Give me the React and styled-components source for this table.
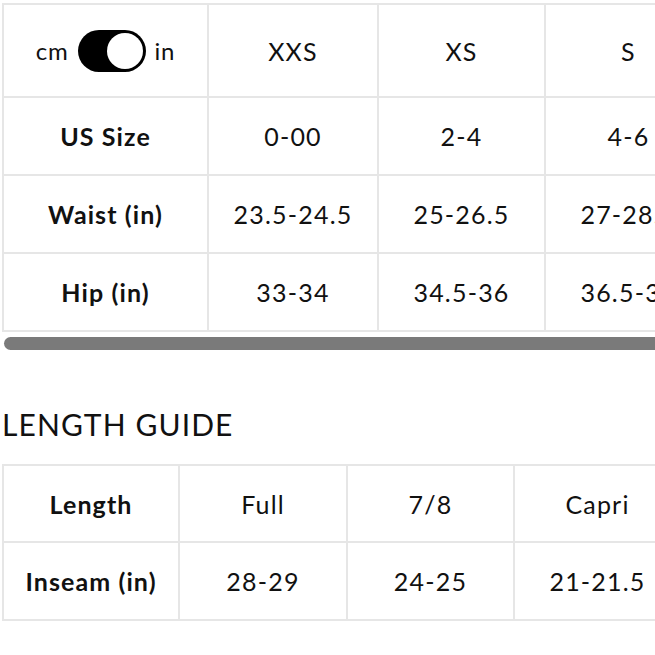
import React from "react";
import styled, { createGlobalStyle } from "styled-components";

const Global = createGlobalStyle`
  html, body { margin: 0; padding: 0; background: #fff; overflow: hidden; }
  body { font-family: Lato, "Noto Sans", Arial, sans-serif; color: #111; }
`;

const Page = styled.div`
  width: 655px;
  height: 655px;
  overflow: hidden;
  padding: 3px 0 0 2px;
  box-sizing: border-box;
`;

const Grid = styled.div`
  display: inline-grid;
  grid-template-columns: ${(p) => p.$cols};
  grid-auto-rows: ${(p) => p.$row}px;
  grid-template-rows: ${(p) => p.$first}px;
  gap: 2px;
  padding: 2px;
  background: #e6e6e6;
`;

const Cell = styled.div`
  background: #fff;
  display: flex;
  align-items: center;
  justify-content: center;
  font-size: 25px;
  letter-spacing: ${(p) => (p.$bold ? "1.1px" : "1.2px")};
  font-weight: ${(p) => (p.$bold ? 700 : 400)};
  white-space: nowrap;
  color: #111;
`;

const UnitSwitch = styled.div`
  display: flex;
  align-items: center;
  gap: 9px;
  font-size: 24px;
  letter-spacing: 0.8px;
`;

const Toggle = styled.div`
  width: 68px;
  height: 42px;
  border-radius: 21px;
  background: #000;
  display: flex;
  align-items: center;
  justify-content: flex-end;
  padding: 3px;
  box-sizing: border-box;
`;

const Knob = styled.div`
  width: 36px;
  height: 36px;
  border-radius: 50%;
  background: #fff;
`;

const ScrollThumb = styled.div`
  margin: 5px 0 0 2px;
  width: 700px;
  height: 13px;
  border-radius: 7px;
  background: #7a7a7a;
`;

const Heading = styled.h2`
  margin: 56px 0 22px 0;
  font-size: 30px;
  line-height: 36px;
  font-weight: 400;
  letter-spacing: 1.1px;
  color: #111;
`;

const sizeCols = ["XXS", "XS", "S", "M", "L"];
const sizeRows = [
  ["US Size", ["0-00", "2-4", "4-6", "8-10", "12-14"]],
  ["Waist (in)", ["23.5-24.5", "25-26.5", "27-28.5", "29-30.5", "31-32.5"]],
  ["Hip (in)", ["33-34", "34.5-36", "36.5-38", "38.5-40", "40.5-42"]],
];

const lengthRows = [
  ["Length", ["Full", "7/8", "Capri", "Short"]],
  ["Inseam (in)", ["28-29", "24-25", "21-21.5", "7-8"]],
];

export default function App() {
  return (
    <>
      <Global />
      <Page>
        <Grid $cols="203px 168px 165px 165px 165px 165px" $first={91} $row={76}>
          <Cell>
            <UnitSwitch>
              <span>cm</span>
              <Toggle>
                <Knob />
              </Toggle>
              <span>in</span>
            </UnitSwitch>
          </Cell>
          {sizeCols.map((c) => (
            <Cell key={c}>{c}</Cell>
          ))}
          {sizeRows.map(([label, vals]) => (
            <React.Fragment key={label}>
              <Cell $bold>{label}</Cell>
              {vals.map((v, i) => (
                <Cell key={i}>{v}</Cell>
              ))}
            </React.Fragment>
          ))}
        </Grid>
        <ScrollThumb />
        <Heading>LENGTH GUIDE</Heading>
        <Grid $cols="174px 166px 165px 165px 165px" $first={75} $row={76}>
          {lengthRows.map(([label, vals]) => (
            <React.Fragment key={label}>
              <Cell $bold>{label}</Cell>
              {vals.map((v, i) => (
                <Cell key={i}>{v}</Cell>
              ))}
            </React.Fragment>
          ))}
        </Grid>
      </Page>
    </>
  );
}
